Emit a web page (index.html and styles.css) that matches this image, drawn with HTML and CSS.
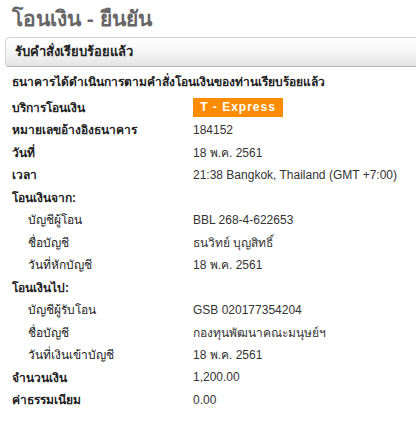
FILE: index.html
```html
<!DOCTYPE html>
<html lang="th">
<head>
    <meta charset="UTF-8">
    <title>โอนเงิน - ยืนยัน</title>
    <link rel="stylesheet" href="styles.css">
</head>
<body>
    <div class="page">
        <h1 class="page-title">โอนเงิน - ยืนยัน</h1>
        <div class="panel-head">รับคำสั่งเรียบร้อยแล้ว</div>
        <p class="notice">ธนาคารได้ดำเนินการตามคำสั่งโอนเงินของท่านเรียบร้อยแล้ว</p>

        <div class="detail">
            <div class="label">บริการโอนเงิน</div>
            <div class="value"><span class="badge">T - Express</span></div>

            <div class="label">หมายเลขอ้างอิงธนาคาร</div>
            <div class="value">184152</div>

            <div class="label">วันที่</div>
            <div class="value">18 พ.ค. 2561</div>

            <div class="label">เวลา</div>
            <div class="value">21:38 Bangkok, Thailand (GMT +7:00)</div>

            <div class="label section">โอนเงินจาก:</div>

            <div class="label sub">บัญชีผู้โอน</div>
            <div class="value">BBL 268-4-622653</div>

            <div class="label sub">ชื่อบัญชี</div>
            <div class="value">ธนวิทย์ บุญสิทธิ์</div>

            <div class="label sub">วันที่หักบัญชี</div>
            <div class="value">18 พ.ค. 2561</div>

            <div class="label section">โอนเงินไป:</div>

            <div class="label sub">บัญชีผู้รับโอน</div>
            <div class="value">GSB 020177354204</div>

            <div class="label sub">ชื่อบัญชี</div>
            <div class="value">กองทุนพัฒนาคณะมนุษย์ฯ</div>

            <div class="label sub">วันที่เงินเข้าบัญชี</div>
            <div class="value">18 พ.ค. 2561</div>

            <div class="label">จำนวนเงิน</div>
            <div class="value">1,200.00</div>

            <div class="label">ค่าธรรมเนียม</div>
            <div class="value">0.00</div>
        </div>
    </div>
</body>
</html>
```

FILE: styles.css
```css
* {
    margin: 0;
    padding: 0;
    box-sizing: border-box;
}

body {
    background: #fff;
    font-family: Tahoma, "Liberation Sans", "Noto Sans", sans-serif;
    font-size: 12px;
    color: #222;
    overflow: hidden;
}

.page {
    padding: 6px 0 0 5px;
}

.page-title {
    padding-left: 7px;
    font-size: 21px;
    font-weight: bold;
    color: #666;
    line-height: 26px;
    margin-bottom: 5px;
}

.panel-head {
    margin-right: -10px;
    height: 30px;
    padding-left: 9px;
    line-height: 28px;
    font-size: 13px;
    font-weight: bold;
    color: #222;
    border: 1px solid #d6d6d6;
    border-bottom-color: #b5b5b5;
    border-radius: 4px 0 0 4px;
    background: linear-gradient(#fefefe 0%, #f7f7f7 45%, #e3e3e3 100%);
}

.notice {
    padding-left: 7px;
    margin-top: 5px;
    line-height: 20px;
    font-weight: bold;
}

.detail {
    display: grid;
    grid-template-columns: 181px 1fr;
    grid-auto-rows: 22.5px;
    align-items: center;
    padding-left: 7px;
    margin-top: 4px;
}

.label {
    font-weight: bold;
    color: #222;
}

.label.section {
    grid-column: 1 / 3;
}

.label.sub {
    padding-left: 16px;
    font-weight: normal;
}

.value {
    color: #333;
}

.badge {
    display: inline-block;
    width: 90px;
    height: 19px;
    line-height: 19px;
    text-align: center;
    background: #ff8c00;
    color: #fff;
    font-weight: bold;
    letter-spacing: 1px;
}
```
